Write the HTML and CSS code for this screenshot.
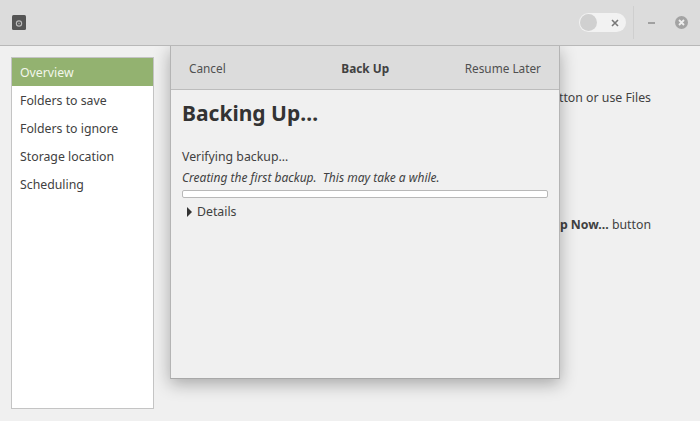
FILE: index.html
```html
<!DOCTYPE html>
<html lang="en">
<head>
  <meta charset="UTF-8">
  <title>Backups</title>
  <link rel="stylesheet" href="styles.css">
</head>
<body>

  <header class="titlebar">
    <svg class="app-icon" width="14" height="15" viewBox="0 0 14 15">
      <rect x="0" y="0" width="14" height="15" rx="1.5" fill="#555"/>
      <circle cx="7" cy="8.5" r="3.2" fill="#bbb"/>
      <circle cx="7" cy="8.5" r="2" fill="#4a4a4a"/>
      <circle cx="7" cy="8.5" r="0.9" fill="#999"/>
    </svg>
    <div class="window-controls">
      <div class="switch">
        <span class="knob"></span>
        <svg width="8" height="8" viewBox="0 0 8 8"><path d="M1 1l6 6M7 1l-6 6" stroke="#777" stroke-width="1.6"/></svg>
      </div>
      <span class="separator"></span>
      <svg class="minimize" width="7" height="2" viewBox="0 0 7 2"><rect width="7" height="2" fill="#a0a0a0"/></svg>
      <svg class="close" width="13" height="13" viewBox="0 0 13 13">
        <circle cx="6.5" cy="6.5" r="6.5" fill="#a3a3a3"/>
        <path d="M4 4l5 5M9 4l-5 5" stroke="#eee" stroke-width="1.8"/>
      </svg>
    </div>
  </header>

  <div class="content">
    <nav class="sidebar">
      <a class="active">Overview</a>
      <a>Folders to save</a>
      <a>Folders to ignore</a>
      <a>Storage location</a>
      <a>Scheduling</a>
    </nav>
    <main class="overview">
      <p class="line-one">To restore, use the Restore button or use Files</p>
      <p class="line-two">To start a backup, click the <b>Back Up Now...</b> button</p>
    </main>
  </div>

  <section class="dialog">
    <div class="dialog-head">
      <span class="head-btn">Cancel</span>
      <span class="head-title">Back Up</span>
      <span class="head-btn">Resume Later</span>
    </div>
    <div class="dialog-body">
      <h1>Backing Up…</h1>
      <div class="status">Verifying backup…</div>
      <div class="note">Creating the first backup.&nbsp; This may take a while.</div>
      <div class="progress"></div>
      <div class="details"><span class="arrow"></span>Details</div>
    </div>
  </section>

</body>
</html>
```

FILE: styles.css
```css
body {
  margin: 0;
  height: 421px;
  overflow: hidden;
  position: relative;
  background: #f0f0f0;
  color: #414141;
  font-family: "Noto Sans", sans-serif;
  font-size: 12.3px;
}

.titlebar {
  height: 45px;
  display: flex;
  align-items: center;
  justify-content: space-between;
  padding: 0 12px;
  background: #dcdcdc;
  border-bottom: 1px solid #b8b8b8;
}

.window-controls {
  display: flex;
  align-items: center;
}

.switch {
  width: 47px;
  height: 19px;
  border-radius: 10px;
  background: #f2f2f2;
  display: flex;
  align-items: center;
  justify-content: space-between;
  padding-right: 7px;
  box-sizing: border-box;
}

.knob {
  width: 17px;
  height: 17px;
  margin-left: 1px;
  border-radius: 50%;
  background: #d0d0d0;
}

.separator {
  width: 1px;
  height: 33px;
  margin: 0 14px 0 7px;
  background: #cfcfcf;
}

.minimize {
  margin-right: 20px;
}

.content {
  display: flex;
  padding: 11px 0 0 11px;
}

.sidebar {
  width: 141px;
  height: 350px;
  background: #fff;
  border: 1px solid #c4c4c4;
  display: flex;
  flex-direction: column;
}

.sidebar a {
  height: 28px;
  line-height: 30px;
  padding-left: 8px;
}

.sidebar a.active {
  background: #93b270;
  color: #f2f6ec;
}

.overview {
  flex: 1;
  display: flex;
  flex-direction: column;
  align-items: flex-end;
  padding-right: 49px;
}

.overview p {
  margin: 0;
  line-height: 18px;
  white-space: nowrap;
}

.line-one {
  padding-top: 32px;
}

.line-two {
  padding-top: 109px;
}

.dialog {
  position: absolute;
  left: 170px;
  top: 46px;
  width: 390px;
  height: 333px;
  box-sizing: border-box;
  background: #f0f0f0;
  border-left: 1px solid #b4b4b4;
  border-right: 1px solid #b4b4b4;
  border-bottom: 1px solid #a8a8a8;
  box-shadow: 0 5px 16px rgba(0, 0, 0, 0.3);
  clip-path: inset(0 -30px -30px -30px);
}

.dialog-head {
  height: 43px;
  display: flex;
  align-items: center;
  justify-content: space-between;
  padding: 0 18px;
  background: #dcdcdc;
  border-bottom: 1px solid #bcbcbc;
  font-size: 11.8px;
}

.head-btn {
  color: #505050;
}

.head-title {
  font-weight: 700;
  margin-left: 40px;
}

.dialog-body {
  padding: 0 11px;
}

h1 {
  margin: 0;
  padding-top: 8px;
  font-size: 21px;
  line-height: 30px;
  font-weight: 700;
  color: #333;
}

.status {
  margin-top: 20px;
  line-height: 18px;
}

.note {
  margin-top: 3px;
  line-height: 18px;
  font-size: 12px;
  font-style: italic;
}

.progress {
  height: 6px;
  margin-top: 3px;
  background: #fff;
  border: 1px solid #b8b8b8;
  border-radius: 2px;
}

.details {
  display: flex;
  align-items: center;
  margin-top: 5px;
  padding-left: 5px;
  line-height: 18px;
}

.arrow {
  width: 0;
  height: 0;
  margin-right: 5px;
  border-left: 5px solid #333;
  border-top: 5px solid transparent;
  border-bottom: 5px solid transparent;
}
```
